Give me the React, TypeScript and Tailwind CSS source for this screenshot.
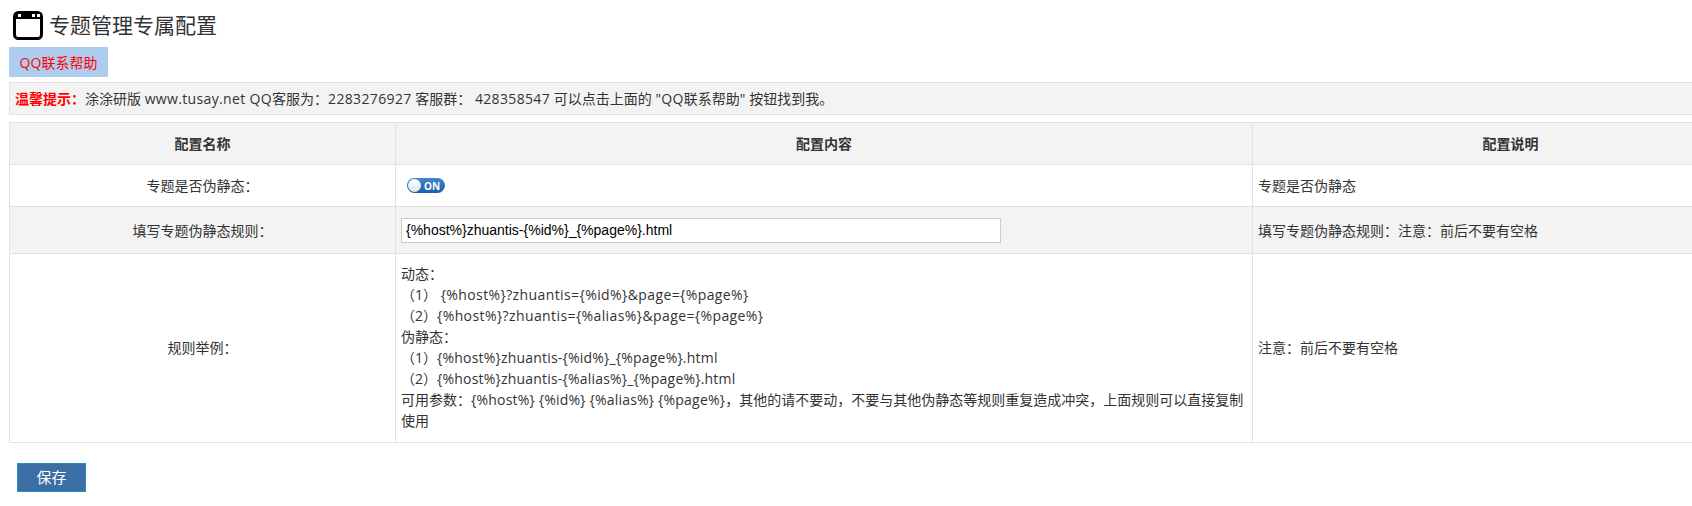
import type { ReactNode } from "react";

const FONT = "font-['Open_Sans','Noto_Sans_CJK_SC',sans-serif]";

// latin runs sit a little wider than Open Sans gives them
function L({ children }: { children: ReactNode }) {
  return <span className="tracking-[0.2px]">{children}</span>;
}

const td = "border border-[#e2e2e2] px-[5px] align-middle";

export default function App() {
  return (
    <div className={`h-[506px] w-[1692px] overflow-hidden bg-white text-[14px] leading-[21px] text-[#333] ${FONT}`}>
      <div className="w-[1768px] pl-[9px]">
        {/* Title */}
        <div className="flex h-[47px] items-center pt-[4px] pl-[4px]">
          <svg width="30" height="29" viewBox="0 0 30 29" className="shrink-0">
            <rect x="1.5" y="1.5" width="27" height="26" rx="4" fill="#fff" stroke="#000" strokeWidth="3" />
            <path d="M5 1h20a4 4 0 0 1 4 4v3H1V5a4 4 0 0 1 4-4z" fill="#000" />
            <rect x="5" y="3" width="3" height="3" fill="#fff" />
            <rect x="19" y="3" width="3" height="3" fill="#fff" />
            <rect x="24" y="3" width="3" height="3" fill="#fff" />
          </svg>
          <h1 className="ml-[6px] text-[21px] font-normal leading-[29px]">专题管理专属配置</h1>
        </div>

        <button className="block h-[30px] w-[99px] bg-[#aecdee] text-[14px] text-[#ff0000]">QQ联系帮助</button>

        <div className="mt-[5px] h-[33px] border border-[#e2e2e2] bg-[#f3f3f3] pl-[5px] leading-[31px]">
          <span className="font-bold text-[#ff0000]">温馨提示：</span>
          涂涂研版 <span className="tracking-[0.35px]">www.tusay.net QQ</span>客服为：<span className="tracking-[0.35px]">2283276927</span> 客服群： <span className="tracking-[0.35px]">428358547</span> 可以点击上面的 <span className="tracking-[0.35px]">"QQ</span>联系帮助<span className="tracking-[0.35px]">"</span> 按钮找到我。
        </div>

        <table className="mt-[7px] w-[1759px] table-fixed border-collapse">
          <colgroup>
            <col className="w-[386px]" />
            <col className="w-[857px]" />
            <col className="w-[516px]" />
          </colgroup>
          <tbody>
            <tr className="h-[42px] bg-[#f3f3f3]">
              <th className={`${td} text-center font-bold`}>配置名称</th>
              <th className={`${td} text-center font-bold`}>配置内容</th>
              <th className={`${td} text-center font-bold`}>配置说明</th>
            </tr>
            <tr className="h-[42px]">
              <td className={`${td} text-center`}>专题是否伪静态：</td>
              <td className={td}>
                <div className="ml-[6px] flex h-[15px] w-[38px] items-center rounded-full bg-gradient-to-b from-[#3f86d0] to-[#1f5ea8] pl-[1px]">
                  <span className="h-[13px] w-[13px] rounded-full bg-gradient-to-b from-white to-[#dfe3e8]" />
                  <span className="ml-[3px] text-[10px] font-bold leading-none text-white">ON</span>
                </div>
              </td>
              <td className={td}>专题是否伪静态</td>
            </tr>
            <tr className="h-[47px] bg-[#f3f3f3]">
              <td className={`${td} text-center`}>填写专题伪静态规则：</td>
              <td className={td}>
                <input
                  readOnly
                  value="{%host%}zhuantis-{%id%}_{%page%}.html"
                  className="block h-[25px] w-[600px] border border-[#cccccc] bg-white px-[4px] font-['Liberation_Sans',sans-serif] text-[14px] text-black outline-none"
                />
              </td>
              <td className={td}>填写专题伪静态规则：注意：前后不要有空格</td>
            </tr>
            <tr className="h-[189px]">
              <td className={`${td} pb-[2px] text-center`}>规则举例：</td>
              <td className={`${td} pb-[2px]`}>
                <div>动态：</div>
                <div>（1） <span className="tracking-[0.4px]">{"{%host%}?zhuantis={%id%}&page={%page%}"}</span></div>
                <div>（2）<span className="tracking-[0.4px]">{"{%host%}?zhuantis={%alias%}&page={%page%}"}</span></div>
                <div>伪静态：</div>
                <div>（1）<L>{"{%host%}zhuantis-{%id%}_{%page%}.html"}</L></div>
                <div>（2）<L>{"{%host%}zhuantis-{%alias%}_{%page%}.html"}</L></div>
                <div>
                  可用参数：<L>{"{%host%} {%id%} {%alias%} {%page%}"}</L>，其他的请不要动，不要与其他伪静态等规则重复造成冲突，上面规则可以直接复制
                </div>
                <div>使用</div>
              </td>
              <td className={`${td} pb-[2px]`}>注意：前后不要有空格</td>
            </tr>
          </tbody>
        </table>

        <button className="ml-[8px] mt-[20px] block h-[29px] w-[69px] border border-[#2b8cc4] bg-[#3a6ea5] text-[15px] text-white">
          保存
        </button>
      </div>
    </div>
  );
}
